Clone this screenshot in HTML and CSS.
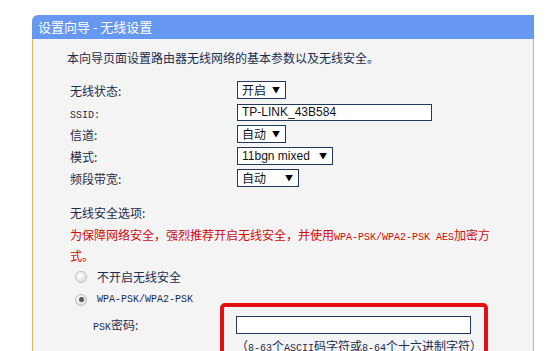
FILE: index.html
```html
<!DOCTYPE html>
<html lang="zh-CN">
<head>
<meta charset="utf-8">
<title>设置向导 - 无线设置</title>
<link rel="stylesheet" href="styles.css">
</head>
<body>
<div class="panel">
  <div class="panel-head">设置向导 - 无线设置</div>
  <div class="panel-body">
    <p class="intro">本向导页面设置路由器无线网络的基本参数以及无线安全。</p>
    <div class="form">
      <div class="row"><span class="label">无线状态:</span><span class="select w49"><span class="val">开启</span><span class="arrow">▼</span></span></div>
      <div class="row"><span class="label"><span class="asc">SSID:</span></span><span class="input w195">TP-LINK_43B584</span></div>
      <div class="row"><span class="label">信道:</span><span class="select w49"><span class="val">自动</span><span class="arrow">▼</span></span></div>
      <div class="row"><span class="label">模式:</span><span class="select w96"><span class="val latin">11bgn mixed</span><span class="arrow">▼</span></span></div>
      <div class="row"><span class="label">频段带宽:</span><span class="select w62"><span class="val">自动</span><span class="arrow">▼</span></span></div>
    </div>
    <div class="security">
      <div class="sec-title">无线安全选项:</div>
      <p class="warn">为保障网络安全，强烈推荐开启无线安全，并使用<span class="asc">WPA-PSK/WPA2-PSK AES</span>加密方式。</p>
      <div class="radio-row"><span class="radio"></span><span>不开启无线安全</span></div>
      <div class="radio-row"><span class="radio checked"></span><span class="asc">WPA-PSK/WPA2-PSK</span></div>
      <div class="psk">
        <div class="highlight"></div>
        <span class="label psk-label"><span class="asc">PSK</span>密码:</span>
        <div class="psk-field">
          <span class="input w235"></span>
          <div class="hint">（<span class="asc">8-63</span>个<span class="asc">ASCII</span>码字符或<span class="asc">8-64</span>个十六进制字符）</div>
        </div>
      </div>
    </div>
  </div>
</div>
</body>
</html>
```

FILE: styles.css
```css
html { overflow: hidden; }
body {
  margin: 0;
  padding: 15px 0 0 32px;
  background: #ffffff;
  font-family: "Noto Sans CJK SC", "DejaVu Sans", sans-serif;
  font-size: 12px;
  color: #1c2d4e;
}
.panel { width: 502px; }
.panel-head {
  height: 24px;
  line-height: 24px;
  background: #6798f1;
  color: #ffffff;
  font-size: 13px;
  padding-left: 6px;
  border-top-left-radius: 6px;
}
.panel-body {
  background: #f4f4f4;
  border-left: 1px solid #e3b26a;
  border-right: 1px solid #e3b26a;
  padding: 10px 0 20px 34px;
  min-height: 320px;
}
.intro { margin: 0; line-height: 18px; }
.form { margin-top: 12px; padding-left: 3px; }
.row {
  display: grid;
  grid-template-columns: 167px auto;
  align-items: center;
  height: 22px;
}
.asc { font-family: "Liberation Mono", "DejaVu Sans Mono", monospace; font-size: 10px; }
.select, .input {
  box-sizing: border-box;
  display: inline-flex;
  align-items: center;
  height: 18px;
  border: 1px solid #22395c;
  background: #ffffff;
  color: #111111;
  justify-self: start;
}
.select { justify-content: space-between; padding: 0 5px 0 4px; }
.input { padding-left: 4px; font-family: "Liberation Sans", Arial, sans-serif; font-size: 12px; height: 17px; }
.val { line-height: 16px; }
.latin { font-family: "Liberation Sans", Arial, sans-serif; }
.arrow { font-size: 8px; line-height: 16px; color: #000; }
.w49 { width: 49px; }
.w62 { width: 62px; }
.w96 { width: 96px; }
.w195 { width: 195px; }
.w235 { width: 235px; height: 18px; }
.security { margin-top: 15px; padding-left: 3px; }
.sec-title { line-height: 18px; }
.warn {
  margin: 4px 0 0;
  width: 421px;
  line-height: 18px;
  color: #d00c0c;
  word-break: break-all;
}
.radio-row {
  display: flex;
  align-items: center;
  height: 23px;
  padding-left: 5px;
  gap: 10px;
}
.radio-row:first-of-type { margin-top: 2px; }
.radio {
  box-sizing: border-box;
  width: 12px;
  height: 12px;
  border-radius: 50%;
  border: 1px solid #bdbdbd;
  background: radial-gradient(circle at 40% 35%, #ffffff 0%, #e6e6e6 60%, #d4d4d4 100%);
  display: inline-flex;
  align-items: center;
  justify-content: center;
}
.radio.checked::after {
  content: "";
  width: 5px;
  height: 5px;
  border-radius: 50%;
  background: #555555;
}
.psk {
  position: relative;
  display: grid;
  grid-template-columns: 143px auto;
  align-items: start;
  margin-top: 5px;
  padding-left: 23px;
}
.psk-label { line-height: 18px; }
.psk-field { display: flex; flex-direction: column; }
.hint { margin-top: 3px; line-height: 18px; white-space: nowrap; }
.highlight {
  position: absolute;
  left: 150px;
  top: -13px;
  width: 260px;
  height: 90px;
  border: 4px solid #e41010;
  border-radius: 5px;
  pointer-events: none;
}
```
